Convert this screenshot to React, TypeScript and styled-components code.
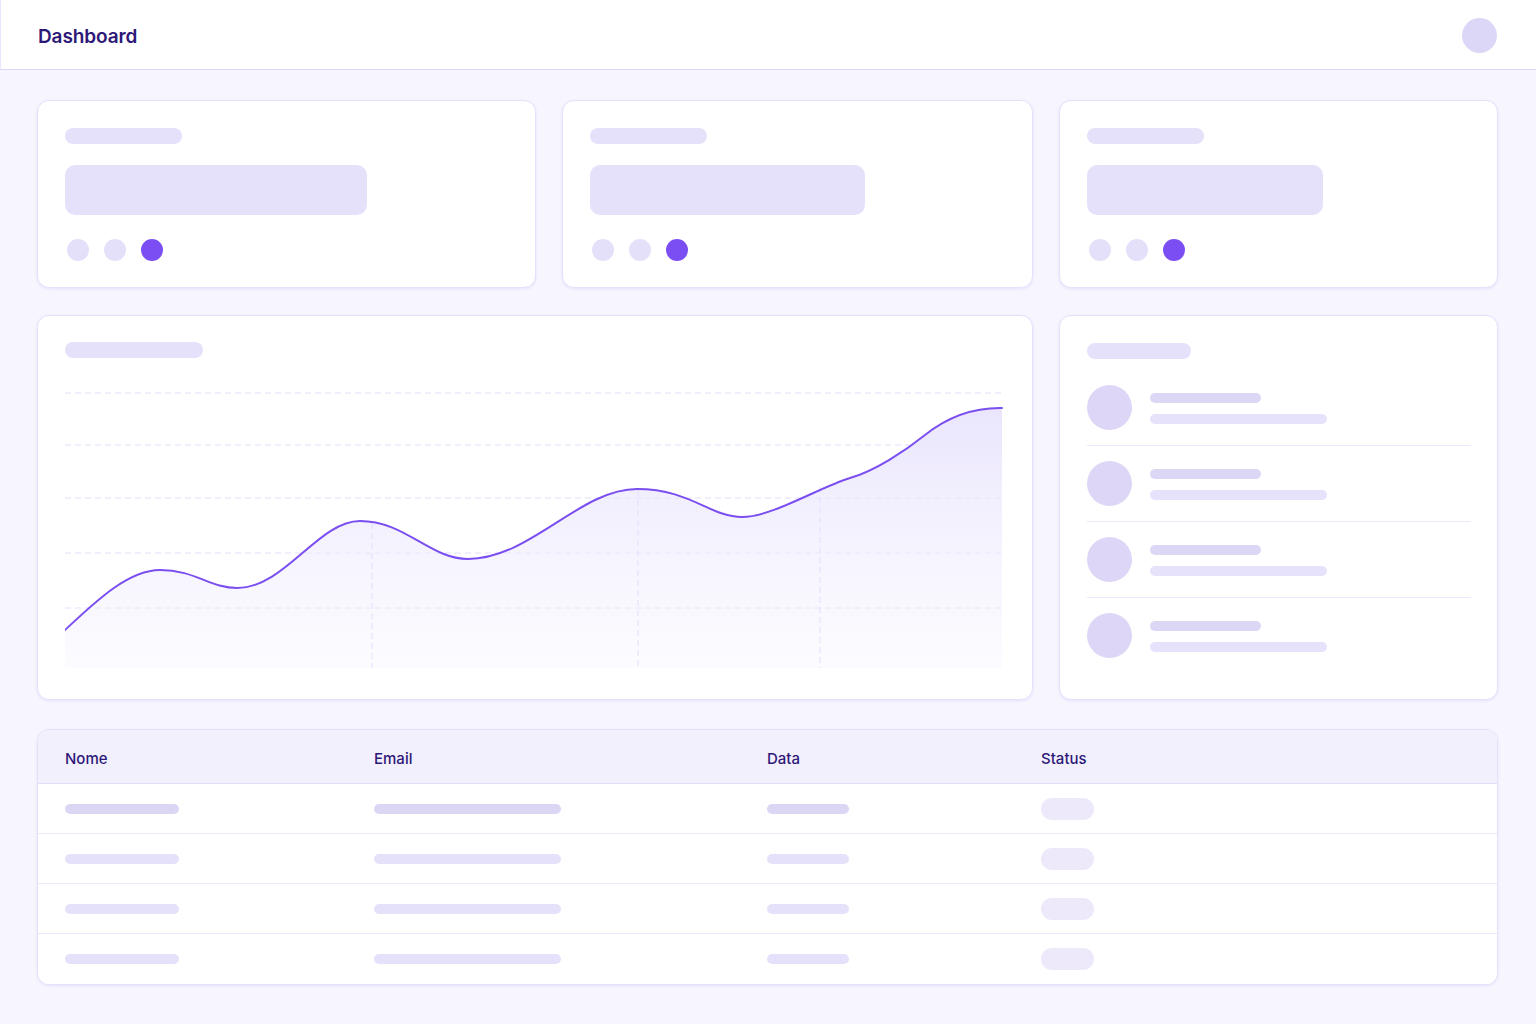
import React from "react";
import styled, { createGlobalStyle } from "styled-components";

const Global = createGlobalStyle`
  html, body { margin: 0; padding: 0; }
  body {
    background: #f7f5fe;
    font-family: Inter, "Noto Sans", sans-serif;
    color: #2e1a7a;
  }
`;

const Page = styled.div`
  min-height: 1024px;
  background: #f7f5fe;
`;

const Header = styled.header`
  height: 67px;
  box-sizing: content-box;
  background: #ffffff;
  border-bottom: 1px solid #ddd6fb;
  border-left: 1px solid #ebe6fd;
  display: flex;
  align-items: center;
  justify-content: space-between;
  padding: 2px 39px 0 37px;
`;

const Title = styled.h1`
  margin: 0;
  font-size: 19px;
  font-weight: 600;
  color: #2d1877;
  letter-spacing: -0.1px;
  padding-top: 1px;
`;

const Avatar = styled.div<{ $size: number; $color?: string }>`
  width: ${(p) => p.$size}px;
  height: ${(p) => p.$size}px;
  border-radius: 50%;
  background: ${(p) => p.$color ?? "#ddd6f8"};
  flex-shrink: 0;
`;

const Main = styled.main`
  padding: 30px 38px 40px 37px;
  display: flex;
  flex-direction: column;
  gap: 27px;
`;

const StatRow = styled.div`
  display: grid;
  grid-template-columns: 499fr 471fr 439fr;
  gap: 26px;
`;

const MiddleRow = styled.div`
  display: grid;
  grid-template-columns: minmax(0, 996fr) minmax(0, 439fr);
  gap: 26px;
`;

const Card = styled.section`
  background: #ffffff;
  border: 1px solid #e6e1fb;
  border-radius: 12px;
  box-shadow: 0 1px 3px rgba(124, 90, 240, 0.12);
  box-sizing: border-box;
  min-width: 0;
`;

const StatCard = styled(Card)`
  padding: 27px 27px 26px;
  display: flex;
  flex-direction: column;
`;

const Bar = styled.div<{ $w: number; $h: number; $color?: string; $r?: number }>`
  width: ${(p) => p.$w}px;
  height: ${(p) => p.$h}px;
  border-radius: ${(p) => (p.$r !== undefined ? p.$r : p.$h / 2)}px;
  background: ${(p) => p.$color ?? "#e6e1fb"};
  flex-shrink: 0;
`;

const ValueBar = styled(Bar)`
  margin-top: 21px;
`;

const Dots = styled.div`
  display: flex;
  gap: 15px;
  margin-top: 24px;
  padding-left: 2px;
`;

const Dot = styled.div<{ $active?: boolean }>`
  width: 22px;
  height: 22px;
  border-radius: 50%;
  background: ${(p) => (p.$active ? "#7b4ef3" : "#e5e0fa")};
`;

const ChartCard = styled(Card)`
  padding: 26px 27px 29px;
  display: flex;
  flex-direction: column;
`;

const ChartSvg = styled.svg`
  display: block;
  margin-top: 22px;
  width: 100%;
  height: 290px;
`;

const ListCard = styled(Card)`
  padding: 27px 26px 20px 27px;
  display: flex;
  flex-direction: column;
`;

const List = styled.ul`
  list-style: none;
  margin: 11px 0 0;
  padding: 0;
`;

const ListItem = styled.li`
  display: flex;
  align-items: center;
  gap: 18px;
  padding: 15px 0;
  border-bottom: 1px solid #ebe7fc;
  &:last-child {
    border-bottom: none;
  }
`;

const ItemText = styled.div`
  display: flex;
  flex-direction: column;
  gap: 11px;
  padding-top: 2px;
`;

const Table = styled.section`
  margin-top: 2px;
  background: #ffffff;
  border: 1px solid #e6e1fb;
  border-radius: 12px;
  box-shadow: 0 1px 3px rgba(124, 90, 240, 0.12);
  overflow: hidden;
`;

const TableRow = styled.div<{ $head?: boolean }>`
  display: grid;
  grid-template-columns: 309px 393px 274px 1fr;
  align-items: center;
  padding: 0 27px;
  height: ${(p) => (p.$head ? 53 : 49)}px;
  background: ${(p) => (p.$head ? "#f3f0fe" : "#ffffff")};
  border-bottom: 1px solid ${(p) => (p.$head ? "#e3ddfb" : "#ece8fc")};
  &:last-child {
    border-bottom: none;
    height: 50px;
  }
`;

const HeadCell = styled.div`
  font-size: 15px;
  font-weight: 500;
  color: #2d1877;
  padding-top: 3px;
`;

const Cell = styled.div`
  display: flex;
  align-items: center;
`;

const curve =
  "M65,630 C95,602 128,570 160,570 C195,570 210,588 237,588 C285,588 318,521 360,521 C405,521 430,559 468,559 C530,559 580,489 637,489 C690,489 710,517 742,517 C772,517 820,487 850,478 C875,471 905,451 925,435 C945,419 970,408 1000,408 L1002,408";

function Chart() {
  const grid = [393, 445, 498, 553, 608];
  const verticals = [
    { x: 372, y: 523 },
    { x: 638, y: 490 },
    { x: 820, y: 487 },
  ];
  return (
    <ChartSvg viewBox="65 380 940 290" preserveAspectRatio="none">
      <defs>
        <linearGradient id="fill" x1="0" y1="0" x2="0" y2="1">
          <stop offset="0%" stopColor="#e9e4fd" stopOpacity="0.95" />
          <stop offset="100%" stopColor="#f3f0fe" stopOpacity="0.25" />
        </linearGradient>
      </defs>
      {grid.map((y) => (
        <line
          key={y}
          x1={65}
          x2={1002}
          y1={y}
          y2={y}
          stroke="#e4defb"
          strokeWidth={1}
          strokeDasharray="6 4"
        />
      ))}
      <path d={`${curve} L1002,668 L65,668 Z`} fill="url(#fill)" />
      {verticals.map((v) => (
        <line
          key={v.x}
          x1={v.x}
          x2={v.x}
          y1={v.y}
          y2={668}
          stroke="#e3defb"
          strokeWidth={1}
          strokeDasharray="6 4"
        />
      ))}
      <path
        d={curve}
        fill="none"
        stroke="#7b4ef0"
        strokeWidth={2}
        strokeLinecap="round"
        strokeLinejoin="round"
      />
    </ChartSvg>
  );
}

const stats = [302, 275, 236];

const rows = [0, 1, 2, 3];

export default function App() {
  return (
    <Page>
      <Global />
      <Header>
        <Title>Dashboard</Title>
        <Avatar $size={35} $color="#ddd7f7" />
      </Header>
      <Main>
        <StatRow>
          {stats.map((w, i) => (
            <StatCard key={i}>
              <Bar $w={117} $h={16} />
              <ValueBar $w={w} $h={50} $r={10} />
              <Dots>
                <Dot />
                <Dot />
                <Dot $active />
              </Dots>
            </StatCard>
          ))}
        </StatRow>
        <MiddleRow>
          <ChartCard>
            <Bar $w={138} $h={16} />
            <Chart />
          </ChartCard>
          <ListCard>
            <Bar $w={104} $h={16} />
            <List>
              {rows.map((r) => (
                <ListItem key={r}>
                  <Avatar $size={45} $color="#ddd6f7" />
                  <ItemText>
                    <Bar $w={111} $h={10} $color="#ddd7f6" />
                    <Bar $w={177} $h={10} $color="#e7e2fb" />
                  </ItemText>
                </ListItem>
              ))}
            </List>
          </ListCard>
        </MiddleRow>
        <Table>
          <TableRow $head>
            <HeadCell>Nome</HeadCell>
            <HeadCell>Email</HeadCell>
            <HeadCell>Data</HeadCell>
            <HeadCell>Status</HeadCell>
          </TableRow>
          {rows.map((r) => {
            const c = r === 0 ? "#dcd6f5" : "#e6e1fb";
            return (
              <TableRow key={r}>
                <Cell>
                  <Bar $w={114} $h={10} $color={c} />
                </Cell>
                <Cell>
                  <Bar $w={187} $h={10} $color={c} />
                </Cell>
                <Cell>
                  <Bar $w={82} $h={10} $color={c} />
                </Cell>
                <Cell>
                  <Bar $w={53} $h={22} $r={11} $color="#ede9fb" />
                </Cell>
              </TableRow>
            );
          })}
        </Table>
      </Main>
    </Page>
  );
}
